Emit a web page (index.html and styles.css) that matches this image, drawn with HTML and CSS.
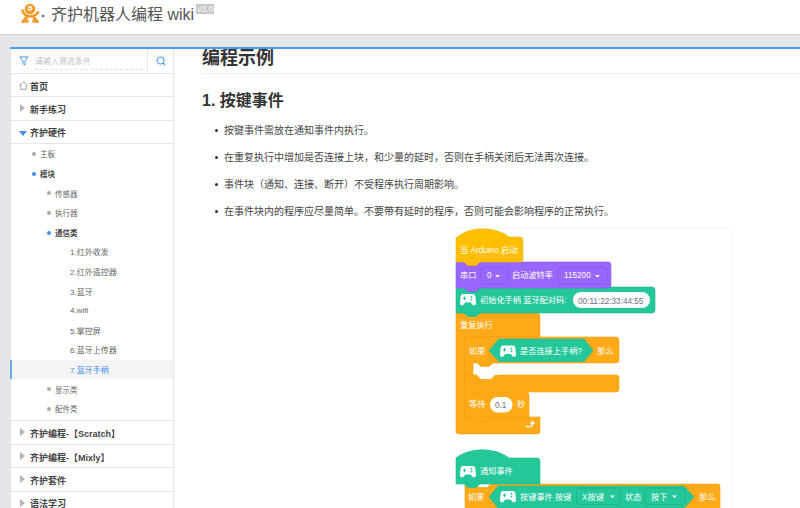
FILE: index.html
```html
<!DOCTYPE html>
<html lang="zh">
<head>
<meta charset="utf-8">
<title>齐护机器人编程 wiki</title>
<link rel="stylesheet" href="styles.css">
</head>
<body>
<header class="topbar">
  <svg class="logo" width="24" height="24" viewBox="0 0 24 24">
    <circle cx="9" cy="7" r="5.300" fill="#f59a23"/>
    <circle cx="9" cy="6.500" r="2.400" fill="#fff"/>
    <circle cx="9" cy="6.500" r="1.100" fill="#f59a23"/>
    <path d="M1.500 8.500 C3 13 6 14.500 9 14.500 C12 14.500 15 13 17 10.500" fill="none" stroke="#f59a23" stroke-width="2.600" stroke-linecap="round"/>
    <path d="M6 14 L1.500 20 L7 19.500 M12 14 L17 20 L12 19.500" fill="#f59a23" stroke="#f59a23" stroke-width="2.200" stroke-linejoin="round" stroke-linecap="round"/>
    <circle cx="22" cy="14" r="1.300" fill="#666"/>
  </svg>
  <span class="site-name">齐护机器人编程 wiki</span>
  <span class="version">v3.0</span>
</header>
<div class="page">
  <aside class="sidebar">
    <div class="filter">
      <div class="filter-field">
        <svg width="10" height="10" viewBox="0 0 10 10" class="filter-icon"><path d="M.8 1H9.200L6 5V8.800L4 7.800V5Z" fill="none" stroke="#3f9bf5" stroke-width="1"/></svg>
        <span class="filter-input">请输入筛选条件</span>
      </div>
      <div class="filter-search">
        <svg width="10" height="10" viewBox="0 0 10 10"><circle cx="4.500" cy="4.500" r="3.500" fill="none" stroke="#3f9bf5" stroke-width="1.100"/><path d="M7 7L9.300 9.300" stroke="#3f9bf5" stroke-width="1.100"/></svg>
      </div>
    </div>
    <div class="nav-head"><svg class="home" width="9" height="9" viewBox="0 0 9 9"><path d="M.5 4.500L4.500 .8L8.500 4.500M1.800 3.800V8.300H7.200V3.800" fill="none" stroke="#888" stroke-width=".8"/></svg>首页</div>
    <div class="nav-head"><i class="tri"></i>新手练习</div>
    <div class="nav-head"><i class="tri-open"></i>齐护硬件</div>
    <div class="nav-tree">
      <div class="item lv1"><i class="dot"></i>主板</div>
      <div class="item lv1 open"><i class="dot"></i>模块</div>
      <div class="item lv2"><i class="dot"></i>传感器</div>
      <div class="item lv2"><i class="dot"></i>执行器</div>
      <div class="item lv2 open"><i class="dot"></i>通信类</div>
      <div class="item lv3">1.红外收发</div>
      <div class="item lv3">2.红外遥控器</div>
      <div class="item lv3">3.蓝牙</div>
      <div class="item lv3">4.wifi</div>
      <div class="item lv3">5.掌控屏</div>
      <div class="item lv3">6.蓝牙上传器</div>
      <div class="item lv3 current">7.蓝牙手柄</div>
      <div class="item lv2"><i class="dot"></i>显示类</div>
      <div class="item lv2"><i class="dot"></i>配件类</div>
    </div>
    <div class="nav-head"><i class="tri"></i>齐护编程-【Scratch】</div>
    <div class="nav-head"><i class="tri"></i>齐护编程-【Mixly】</div>
    <div class="nav-head"><i class="tri"></i>齐护套件</div>
    <div class="nav-head"><i class="tri"></i>语法学习</div>
  </aside>
  <main class="content">
    <h1>编程示例</h1>
    <h2>1. 按键事件</h2>
    <ul>
      <li>按键事件需放在通知事件内执行。</li>
      <li>在重复执行中增加是否连接上块，和少量的延时，否则在手柄关闭后无法再次连接。</li>
      <li>事件块（通知、连接、断开）不受程序执行周期影响。</li>
      <li>在事件块内的程序应尽量简单。不要带有延时的程序，否则可能会影响程序的正常执行。</li>
    </ul>
    <div class="figure">
      <svg width="280" height="285" viewBox="452 226 280 285" class="blocks">
        <defs>
          <g id="pad">
            <path d="M3 0H13C14.500 0 15 1 15.400 2.500L16 8.500C16.300 11.500 13.500 12.300 12 10.300L10.800 8.500H5.200L4 10.300C2.500 12.300 -.3 11.500 0 8.500L.6 2.500C1 1 1.500 0 3 0Z" fill="#fff"/>
            <path d="M4.500 2.500V6M2.800 4.250H6.200" stroke="#24c79a" stroke-width="1.100"/>
            <circle cx="11.500" cy="3" r=".9" fill="#24c79a"/>
            <circle cx="11.500" cy="5.600" r=".9" fill="#24c79a"/>
          </g>
        </defs>
        <path class="frame" d="M452 227.500H731.500V511"/>
        <!-- second stack -->
        <path class="orange" d="M465 485Q465 483 467 483H475L479 486.500H487L491 483H718Q720 483 720 485V512H465Z"/>
        <path class="green" d="M456 457C470 446 495 446 509 457H537Q540 457 540 460V483H480L476 486.500H468L464 483H456Z"/>
        <use href="#pad" x="460" y="465"/>
        <text x="480" y="473">通知事件</text>
        <path class="darkgreen" d="M498 485H684L694 496L684 507H498L489 496Z"/>
        <text x="468" y="498.500">如果</text>
        <use href="#pad" x="500" y="490"/>
        <text x="520" y="498.500">按键事件 按键</text>
        <rect class="field-green" x="576.500" y="487" width="44" height="16.500" rx="3"/>
        <text x="582" y="498.500">X按键</text>
        <path class="caret" d="M610 494.500h5l-2.500 2.500z"/>
        <text x="625" y="498.500">状态</text>
        <rect class="field-green" x="645" y="487" width="40" height="16.500" rx="3"/>
        <text x="651" y="498.500">按下</text>
        <path class="caret" d="M672 494.500h5l-2.500 2.500z"/>
        <text x="699" y="498.500">那么</text>
        <!-- loop -->
        <path class="orange" d="M456 312H537Q540 312 540 315V336H465V416H540V430Q540 433 537 433H459Q456 433 456 430Z"/>
        <path class="orange" d="M465 391H526Q529 391 529 394V416H490L486 420H478L474 416H465Z"/>
        <text x="469" y="406">等待</text>
        <rect class="field-white" x="490" y="396" width="22.500" height="15.500" rx="7.750"/>
        <text x="495" y="406.500" class="dark">0.1</text>
        <text x="517" y="406">秒</text>
        <path class="orange" d="M465 374H616Q619 374 619 377V388Q619 391 616 391H465Z"/>
        <path class="slot" d="M477 374L481 378H491L495 374H500V372H477Z"/>
        <path class="orange" d="M465 336H616Q619 336 619 339V359Q619 362 616 362H493L489 365.500H481L477 362H473V374H465Z"/>
        <text x="469" y="352.500">如果</text>
        <path class="darkgreen" d="M499 338H584L593 349.500L584 360.500H499L489 349.500Z"/>
        <use href="#pad" x="500" y="344.500"/>
        <text x="520" y="352.500">是否连接上手柄?</text>
        <text x="597" y="352.500">那么</text>
        <path class="arrow" d="M526 425.500H530Q532.500 425.500 532.500 421.500M530.500 423L532.500 420.500L534.500 423" />
        <text x="460" y="327">重复执行</text>
        <!-- init -->
        <path class="green" d="M456 286H652Q655 286 655 289V309Q655 312 652 312H480L476 315.500H468L464 312H456Z"/>
        <use href="#pad" x="460" y="293"/>
        <text x="480" y="302">初始化手柄 蓝牙配对码:</text>
        <rect class="field-white" x="573" y="291" width="77" height="16" rx="8"/>
        <text x="578" y="302.500" class="dark">00:11:22:33:44:55</text>
        <!-- serial -->
        <path class="purple" d="M456 261H608Q611 261 611 264V284Q611 287 608 287H480L476 290.500H468L464 287H456Z"/>
        <text x="460" y="277">串口</text>
        <rect class="field-purple" x="481" y="266" width="27" height="17" rx="3"/>
        <text x="487" y="277">0</text>
        <path class="caret" d="M495 274h5l-2.500 2.500z"/>
        <text x="512" y="277">启动波特率</text>
        <rect class="field-purple" x="558" y="266" width="49" height="17" rx="3"/>
        <text x="564" y="277">115200</text>
        <path class="caret" d="M595 274h5l-2.500 2.500z"/>
        <!-- hat -->
        <path class="yellow" d="M456 237C470 225 495 225 509 236H520Q523 236 523 239V258Q523 261 520 261H480L476 264.500H468L464 261H456Z"/>
        <text x="460" y="251.500">当 Arduino 启动</text>
      </svg>
    </div>
  </main>
</div>
</body>
</html>
```
FILE: styles.css
```css
* { box-sizing: border-box; }
html, body { margin: 0; height: 100%; overflow: hidden; }
body {
  background: #e4e6ea;
  font-family: "Liberation Sans", "Noto Sans CJK SC", sans-serif;
  color: #333;
}
.topbar {
  height: 35px;
  background: #fff;
  border-bottom: 1px solid #d2d2d2;
  display: flex;
  align-items: flex-start;
  padding-left: 21px;
}
.logo { margin-top: 2px; flex: none; }
.site-name {
  margin-left: 6px;
  font-size: 16px;
  line-height: 29px;
  color: #555;
}
.version {
  margin: 4px 0 0 2px;
  padding: 0 1px;
  background: #c6c6c6;
  color: #fff;
  font-size: 8.500px;
  line-height: 10px;
  height: 10px;
}
.page {
  margin: 12px 0 0 10px;
  border-top: 2px solid #4a9df0;
  height: 461px;
  display: flex;
  overflow: hidden;
}
.sidebar {
  width: 164px;
  flex: none;
  background: #fff;
  background-clip: padding-box;
  border-left: 1px solid #dfe1e5;
  border-right: 1px solid #e8e8e8;
}
.filter {
  height: 25px;
  display: flex;
  border-bottom: 1px solid #e6e6e6;
}
.filter-field {
  width: 137px;
  display: flex;
  align-items: center;
  padding: 0 4px 0 8px;
  border-right: 1px solid #e8e8e8;
}
.filter-icon { flex: none; }
.filter-input {
  flex: 1;
  margin: 1px 0 0 6px;
  font-size: 8px;
  line-height: 15px;
  color: #c2c2c2;
  border-bottom: 1px dashed #e2e2e2;
}
.filter-search {
  flex: 1;
  display: flex;
  align-items: center;
  justify-content: center;
}
.nav-head {
  height: 23.400px;
  border-bottom: 1px solid #e6e6e6;
  padding: 2px 0 0 19px;
  display: flex;
  align-items: center;
  font-size: 9px;
  font-weight: bold;
  color: #444;
  position: relative;
}
.home { position: absolute; left: 8px; top: 7px; }
.tri {
  position: absolute;
  left: 9px;
  top: 7px;
  border-left: 5px solid #b5b5b5;
  border-top: 4.500px solid transparent;
  border-bottom: 4.500px solid transparent;
}
.tri-open {
  position: absolute;
  left: 8px;
  top: 10px;
  border-top: 5px solid #3f8fe8;
  border-left: 4.500px solid transparent;
  border-right: 4.500px solid transparent;
}
.nav-tree {
  padding: 0 0 2px;
  border-bottom: 1px solid #e6e6e6;
}
.item {
  height: 19.600px;
  display: flex;
  align-items: center;
  font-size: 7.500px;
  color: #666;
  position: relative;
}
.lv1 { padding-left: 29px; }
.lv2 { padding-left: 44px; }
.lv3 { padding-left: 59px; font-size: 8px; }
.dot {
  position: absolute;
  width: 4px;
  height: 4px;
  border-radius: 50%;
  background: #aaa;
  top: 8px;
}
.lv1 .dot { left: 21px; }
.lv2 .dot { left: 36px; }
.open { font-weight: bold; color: #444; }
.open .dot { background: #3f8fe8; }
.current {
  background: #f4f4f4;
  color: #3f8fe8;
  box-shadow: inset 2px 0 0 #6aaee8;
  margin-left: -1px;
  padding-left: 60px;
}
.content {
  flex: 1;
  background: #fff;
  padding: 0 0 0 28px;
  overflow: hidden;
  min-width: 0;
}
h1 {
  margin: 0;
  height: 25px;
  font-size: 18px;
  line-height: 18px;
  font-weight: bold;
  color: #333;
  border-bottom: 1px solid #eee;
}
h2 {
  margin: 16px 0 0;
  font-size: 16px;
  line-height: 22px;
  font-weight: bold;
  color: #333;
}
ul {
  margin: 5px 0 0;
  padding: 0 0 0 22px;
  list-style: none;
}
li {
  font-size: 10px;
  line-height: 27px;
  color: #444;
  position: relative;
  white-space: nowrap;
}
li::before {
  content: "";
  position: absolute;
  left: -9px;
  top: 12px;
  width: 3px;
  height: 3px;
  border-radius: 50%;
  background: #333;
}
.figure { margin: 2px 0 0 250px; }
.blocks { display: block; }
.blocks text { font-size: 8.200px; fill: #fff; }
.blocks text.dark { fill: #6b7180; }
.frame { fill: none; stroke: #f6f6f6; stroke-width: 1; }
.slot { fill: #fff; }
.orange { fill: #ffab19; stroke: #f0a016; stroke-width: .6; }
.green { fill: #24c79a; stroke: #1fb98e; stroke-width: .6; }
.darkgreen { fill: #24c79a; stroke: #1fb98e; stroke-width: .6; }
.purple { fill: #9966ff; stroke: #8c5be8; stroke-width: .6; }
.yellow { fill: #ffbf00; stroke: #f2b500; stroke-width: .6; }
.field-white { fill: #fff; }
.field-purple { fill: #9966ff; stroke: #855cd6; stroke-width: .8; }
.field-green { fill: #24c79a; stroke: #1fae87; stroke-width: .8; }
.caret { fill: #fff; }
.arrow { fill: none; stroke: #fff; stroke-width: 1.300; }
```
